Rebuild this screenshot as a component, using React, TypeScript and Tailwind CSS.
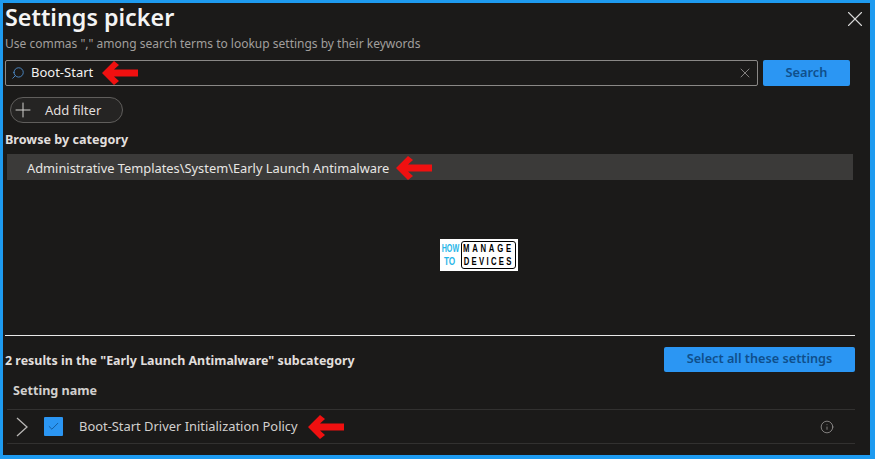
import React from 'react';
import { Search, X, Plus, Check, Info } from 'lucide-react';

const font = "font-['Noto_Sans','Open_Sans',sans-serif]";

const RedArrow = () => (
  <svg width="36" height="24" viewBox="0 0 36 24" className="shrink-0">
    <path d="M12 0 L17 4 L12 8.5 L36 8.5 L36 15.5 L12 15.5 L17 20 L12 24 L0 12 Z" fill="#f01010" />
  </svg>
);

const Logo = () => (
  <div className="flex h-[32px] w-[78px] items-center overflow-hidden bg-white font-['Liberation_Sans',sans-serif] font-bold">
    <div className="flex w-[20px] flex-col items-center text-[11px] leading-[13px] text-[#29b6e8]">
      <span className="scale-x-[0.65]">HOW</span>
      <span className="scale-x-[0.75]">TO</span>
    </div>
    <div className="ml-[1px] flex h-[28px] w-[55px] flex-col items-center justify-center rounded-[3px] border border-black text-[11px] leading-[13px] whitespace-nowrap text-black">
      <span className="scale-x-[0.7] tracking-[4px]">MANAGE</span>
      <span className="scale-x-[0.7] tracking-[3.3px]">DEVICES</span>
    </div>
  </div>
);

export default function App() {
  return (
    <div className={`h-[459px] w-[875px] overflow-hidden bg-[#1b1a19] border-[#1e9bf0] border-t-[3px] border-l-[3px] border-r-[5px] border-b-[4px] text-[#f3f2f1] ${font}`}>
      <div className="flex h-full flex-col">
        <div className="flex h-[28px] items-start justify-between pl-[2px] pr-[2px]">
          <h1 className="text-[23.3px] leading-[28px] font-semibold text-[#f4f4f4]">Settings picker</h1>
          <X className="mt-[3px] h-[26px] w-[26px] text-[#d8d8d8]" strokeWidth={1} />
        </div>
        <p className="mt-[5px] pl-[2px] text-[12px] leading-[16px] text-[#a19f9d]">
          Use commas "," among search terms to lookup settings by their keywords
        </p>

        <div className="mt-[8px] flex items-center pl-[2px]">
          <div className="flex h-[26px] w-[753px] items-center rounded-[2px] border border-[#8a8886] pl-[5px] pr-[4px]">
            <Search className="h-[14px] w-[14px] -scale-x-100 text-[#4f8fd0]" strokeWidth={1.5} />
            <span className="ml-[6px] text-[13px] text-[#f3f2f1]">Boot-Start</span>
            <span className="ml-[9px]"><RedArrow /></span>
            <X className="ml-auto h-[16px] w-[16px] text-[#8a8886]" strokeWidth={1.4} />
          </div>
          <button className="ml-[5px] h-[26px] w-[87px] rounded-[2px] bg-[#2b96f3] text-[12.8px] font-semibold text-[#0f4f8c]">
            Search
          </button>
        </div>

        <div className="mt-[11px] pl-[7px]">
          <div className="flex h-[26px] w-[113px] items-center rounded-full border border-[#605e5c] bg-[#252423]">
            <Plus className="h-[24px] w-[24px] text-[#d2d0ce]" strokeWidth={1} />
            <span className="ml-[10px] pt-[2px] text-[13px] text-[#e1dfdd]">Add filter</span>
          </div>
        </div>

        <h2 className="mt-[8px] pl-[2px] text-[12.6px] leading-[18px] font-bold text-[#e1dfdd]">Browse by category</h2>

        <div className="mt-[5px] ml-[4px] flex h-[26px] w-[846px] items-center bg-[#3b3a39] pl-[20px] text-[12.85px] text-[#e8e6e4]">
          <span className="pt-[4px]">Administrative Templates\System\Early Launch Antimalware</span>
          <span className="ml-[7px] pt-[2px]"><RedArrow /></span>
        </div>

        <div className="flex h-[155px] items-center pl-[437px]">
          <div className="-mt-[5px]"><Logo /></div>
        </div>

        <div className="ml-[2px] mr-[15px] h-px bg-[#e8e8e8]" />

        <div className="mt-[11px] flex items-center justify-between pl-[2px] pr-[15px]">
          <span className="pt-[4px] text-[12.45px] font-bold text-[#e1dfdd]">2 results in the "Early Launch Antimalware" subcategory</span>
          <button className="h-[25px] w-[191px] rounded-[2px] bg-[#2b96f3] pb-[2px] text-[12.7px] font-semibold text-[#0f4f8c]">
            Select all these settings
          </button>
        </div>

        <div className="mt-[5px] flex h-[28px] items-center pl-[10px] text-[12.6px] font-bold text-[#d2d0ce]">Setting name</div>

        <div className="mt-[4px] ml-[4px] mr-[15px] flex h-[35px] items-center border-y border-[#323130] pl-[9px]">
          <svg width="12" height="20" viewBox="0 0 12 20" fill="none" stroke="#b8b6b4" strokeWidth="1.3">
            <path d="M1 1 L11 10 L1 19" />
          </svg>
          <span className="ml-[16px] flex h-[19px] w-[19px] items-center justify-center rounded-[1px] bg-[#2b96f3]">
            <Check className="h-[13px] w-[13px] text-[#0f4f8c]" strokeWidth={1.5} />
          </span>
          <span className="ml-[16px] text-[12.9px] text-[#d2d0ce]">Boot-Start Driver Initialization Policy</span>
          <span className="ml-[10px]"><RedArrow /></span>
          <Info className="ml-auto mr-[21px] h-[14px] w-[14px] text-[#a19f9d]" strokeWidth={1.3} />
        </div>
      </div>
    </div>
  );
}
